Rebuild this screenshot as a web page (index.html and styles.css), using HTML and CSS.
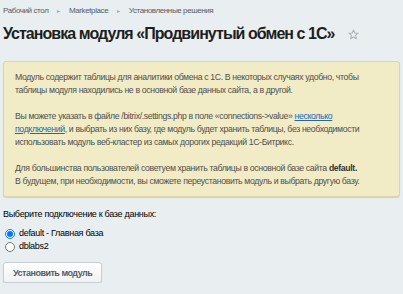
FILE: index.html
```html
<!DOCTYPE html>
<html lang="ru">
<head>
<meta charset="utf-8">
<link rel="stylesheet" href="styles.css">
</head>
<body>
<div class="page">
  <nav class="crumbs">
    <a href="#">Рабочий стол</a><span class="sep">&#9656;</span>
    <a href="#">Marketplace</a><span class="sep">&#9656;</span>
    <a href="#">Установленные решения</a>
  </nav>
  <h1 class="title">Установка модуля «Продвинутый обмен с 1С»<span class="star"><svg width="11" height="11" viewBox="0 0 12 12"><path d="M6 1 L7.4 4.3 L11 4.6 L8.3 7 L9.1 10.6 L6 8.7 L2.9 10.6 L3.7 7 L1 4.6 L4.6 4.3 Z" fill="none" stroke="#aab3ba" stroke-width="1.1" stroke-linejoin="round"/></svg></span></h1>
  <div class="note">
    <p>Модуль содержит таблицы для аналитики обмена с 1С. В некоторых случаях удобно, чтобы<br>таблицы модуля находились не в основной базе данных сайта, а в другой.</p>
    <p>Вы можете указать в файле /bitrix/.settings.php в поле «connections-&gt;value» <a href="#">несколько<br>подключений</a>, и выбрать из них базу, где модуль будет хранить таблицы, без необходимости<br>использовать модуль веб-кластер из самых дорогих редакций 1С-Битрикс.</p>
    <p>Для большинства пользователей советуем хранить таблицы в основной базе сайта <b>default.</b><br>В будущем, при необходимости, вы сможете переустановить модуль и выбрать другую базу.</p>
  </div>
  <form class="form">
    <div class="label">Выберите подключение к базе данных:</div>
    <div class="options">
      <label class="opt"><input type="radio" name="db" checked> default - Главная база</label>
      <label class="opt"><input type="radio" name="db"> dblabs2</label>
    </div>
    <button type="button" class="btn">Установить модуль</button>
  </form>
</div>
</body>
</html>
```
FILE: styles.css
```css
html, body {
  margin: 0;
  padding: 0;
  background: #e9eef0;
  font-family: "Liberation Sans", Arial, sans-serif;
  color: #000;
}
.page {
  padding: 5px 3px 0 3px;
}
.crumbs {
  font-size: 8px;
  letter-spacing: -0.4px;
  color: #535c69;
  display: flex;
  align-items: center;
  height: 10px;
}
.crumbs a {
  color: #535c69;
  text-decoration: none;
}
.crumbs .sep {
  color: #a0a8b0;
  font-size: 6px;
  margin: 0 9px;
}
.title {
  margin: 9px 0 0 0;
  font-size: 16px;
  letter-spacing: -0.95px;
  font-weight: bold;
  color: #1e1e1e;
  line-height: 20px;
  display: flex;
  align-items: center;
}
.star {
  display: inline-flex;
  margin-left: 13px;
}
.note {
  margin-top: 17px;
  background: #f1ecc5;
  border: 1px solid #dcd5a5;
  border-radius: 3px;
  box-shadow: 0 1px 1px rgba(0,0,0,0.12);
  padding: 9px 11px 8px 11px;
  font-size: 8.7px;
  letter-spacing: -0.35px;
  line-height: 13px;
  color: #4e4e4e;
}
.note p {
  margin: 0;
}
.note p + p {
  margin-top: 13px;
}
.note a {
  color: #2067b0;
}
.note b {
  color: #333;
}
.form {
  margin-top: 11px;
  font-size: 9px;
  letter-spacing: -0.3px;
  color: #000;
}
.label {
  line-height: 13px;
}
.options {
  margin-top: 6px;
  display: flex;
  flex-direction: column;
}
.opt {
  display: flex;
  align-items: center;
  height: 13px;
  line-height: 13px;
}
.opt input {
  margin: 0 4px 0 2px;
  width: 10px;
  height: 10px;
}
.btn {
  margin-top: 9px;
  height: 21px;
  padding: 0 9px;
  font-family: inherit;
  font-size: 9px;
  letter-spacing: -0.5px;
  font-weight: bold;
  color: #535c69;
  background: linear-gradient(#ffffff, #f0f2f3);
  border: 1px solid #c7ced3;
  border-radius: 3px;
  box-shadow: 0 1px 1px rgba(0,0,0,0.15);
}
```
